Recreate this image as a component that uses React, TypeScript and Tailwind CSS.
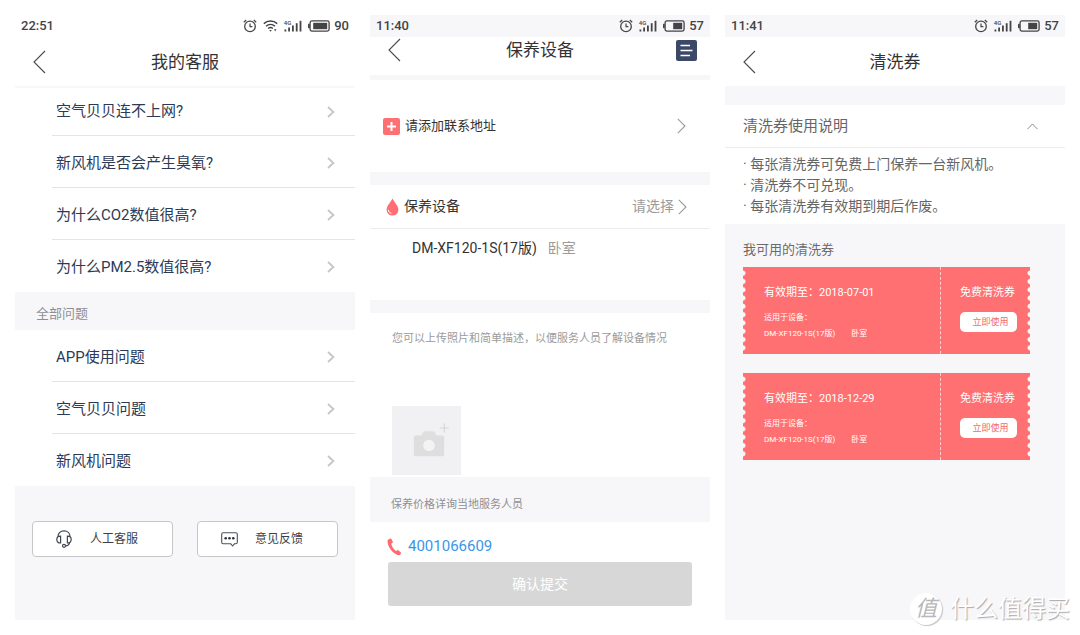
import type { ReactNode } from "react";

function AlarmIcon() {
  return (
    <svg width="14" height="14" viewBox="0 0 14 14" fill="none" stroke="currentColor" aria-hidden="true">
      <circle cx="7" cy="7.4" r="5.3" strokeWidth="1.3" />
      <path d="M7 4.4V7.6H9.4" strokeWidth="1.2" />
      <path d="M0.8 3.2 3.2 1M13.2 3.2 10.8 1" strokeWidth="1.2" />
    </svg>
  );
}

function WifiIcon() {
  return (
    <svg width="15" height="14" viewBox="0 0 15 14" fill="none" stroke="currentColor" aria-hidden="true">
      <path d="M0.8 4.6C4.6 1.2 10.4 1.2 14.2 4.6" strokeWidth="1.5" />
      <path d="M3 7.2C5.6 4.9 9.4 4.9 12 7.2" strokeWidth="1.4" />
      <path d="M5.1 9.5C6.5 8.3 8.5 8.3 9.9 9.5" strokeWidth="1.3" />
      <path d="M6.2 11.1H8.8L7.5 12.8Z" fill="currentColor" stroke="none" />
      <path d="M11 10.2H13.4L12.2 12.4Z" fill="currentColor" stroke="none" />
    </svg>
  );
}

function SignalIcon() {
  return (
    <span className="flex items-end">
      <span className="-mr-[7px] self-start text-[6px] leading-[6px] font-medium">4G</span>
      <svg width="18" height="12" viewBox="0 0 18 12" fill="currentColor" aria-hidden="true">
        <rect x="0.5" y="9.5" width="1.8" height="2" />
        <rect x="4.2" y="7.5" width="1.8" height="4" />
        <rect x="8" y="5.5" width="1.8" height="6" />
        <rect x="11.8" y="3.2" width="1.8" height="8.3" />
        <rect x="15.6" y="0.8" width="1.8" height="10.7" />
      </svg>
    </span>
  );
}

function BatteryIcon({ level }: { level: number }) {
  const width = Math.round((15 * level) / 100);
  return (
    <svg width="22" height="12" viewBox="0 0 22 12" aria-hidden="true">
      <rect x="2.1" y="0.9" width="19" height="10.2" rx="1.8" fill="none" stroke="currentColor" strokeWidth="1.3" />
      <rect x="0" y="3.8" width="1.8" height="4.4" rx="0.6" fill="currentColor" />
      <rect x={19.2 - width} y="2.8" width={width} height="6.4" fill="currentColor" />
    </svg>
  );
}

function StatusBar({ time, level, wifi = false }: { time: string; level: number; wifi?: boolean }) {
  return (
    <div
      className={`flex h-[22px] items-center justify-between px-[6px] text-[13px] leading-[22px] font-medium text-[#444446] ${
        wifi ? "bg-white" : "bg-[#f7f7fa]"
      }`}
    >
      <span>{time}</span>
      <span className="flex items-center">
        <AlarmIcon />
        {wifi && (
          <span className="ml-[6px]">
            <WifiIcon />
          </span>
        )}
        <span className="ml-[6px]">
          <SignalIcon />
        </span>
        <span className="mr-[4px] ml-[6px]">
          <BatteryIcon level={level} />
        </span>
        <span>{level}</span>
      </span>
    </div>
  );
}

function BackButton() {
  return (
    <button type="button" aria-label="返回" className="ml-[5px] w-[13px]">
      <svg width="13" height="24" viewBox="0 0 13 24" fill="none" stroke="#4a4a4a" strokeWidth="1.1" aria-hidden="true">
        <path d="M12 1 1 12 12 23" />
      </svg>
    </button>
  );
}

function TitleBar({ title, className, action }: { title: string; className: string; action?: ReactNode }) {
  return (
    <header className={`grid grid-cols-[1fr_auto_1fr] px-[13px] ${className}`}>
      <BackButton />
      <h1 className="text-[17px] leading-6 text-[#333]">{title}</h1>
      <span className="flex h-6 items-center justify-end">{action}</span>
    </header>
  );
}

function ThinChevron() {
  return (
    <svg width="9" height="16" viewBox="0 0 9 16" fill="none" stroke="#9a9a9a" strokeWidth="1.1" aria-hidden="true">
      <path d="M0.8 0.8 8 8 0.8 15.2" />
    </svg>
  );
}

function QuestionList({ items, first = "h-[51px] pt-[3px]" }: { items: string[]; first?: string }) {
  return (
    <ul className="pb-px pl-[37px]">
      {items.map((item, i) => (
        <li key={item} className={i < items.length - 1 ? "border-b border-[#e4e4e6]" : ""}>
          <a
            href="#"
            className={`flex items-center justify-between pr-5 pl-1 text-[15px] text-[#2c3a56] ${
              i === 0 ? first : "h-[51px] pt-[3px]"
            }`}
          >
            {item}
            <svg width="8" height="12" viewBox="0 0 8 12" fill="none" stroke="#c3c6cb" strokeWidth="1.8" aria-hidden="true">
              <path d="M1 1 6.4 6 1 11" />
            </svg>
          </a>
        </li>
      ))}
    </ul>
  );
}

function HeadsetIcon() {
  return (
    <svg width="16" height="18" viewBox="0 0 16 18" fill="none" stroke="#3f4450" strokeWidth="1.2" aria-hidden="true">
      <path d="M2 6.6C2 3 4.6 0.9 8 0.9S14 3 14 6.6" />
      <path d="M4.6 6.2C2.4 6 0.8 7 0.8 9.5S2.4 13.2 4.6 13Z" />
      <path d="M11.4 6.2C13.6 6 15.2 7 15.2 9.5S13.6 13.2 11.4 13Z" />
      <path d="M13.6 12.8C13 15 11.6 15.8 9.6 15.9" />
      <circle cx="8" cy="15.8" r="1.5" />
    </svg>
  );
}

function MessageIcon() {
  return (
    <svg width="17" height="15" viewBox="0 0 17 15" fill="none" aria-hidden="true">
      <path
        d="M2.2 0.7H14.8Q16.3 0.7 16.3 2.2V10.3Q16.3 11.8 14.8 11.8H13.4L11.6 14L9.8 11.8H2.2Q0.7 11.8 0.7 10.3V2.2Q0.7 0.7 2.2 0.7Z"
        stroke="#4b505c"
        strokeWidth="1.1"
      />
      <g fill="#2c313c">
        <circle cx="4.7" cy="6.3" r="1.3" />
        <circle cx="8.5" cy="6.3" r="1.3" />
        <circle cx="12.3" cy="6.3" r="1.3" />
      </g>
    </svg>
  );
}

function ServiceButton({ icon, label }: { icon: ReactNode; label: string }) {
  return (
    <button
      type="button"
      className="flex h-9 flex-1 items-center rounded-[4px] border border-[#c6c6c8] bg-white pl-[23px] text-[12px] text-[#3c3f48]"
    >
      <span className="flex w-[34px]">{icon}</span>
      {label}
    </button>
  );
}

function SupportScreen() {
  return (
    <section className="flex flex-col bg-white">
      <StatusBar time="22:51" level={90} wifi />
      <TitleBar title="我的客服" className="h-[51px] items-center border-b-2 border-[#f8f8f9]" />
      <QuestionList
        first="h-[47px]"
        items={["空气贝贝连不上网?", "新风机是否会产生臭氧?", "为什么CO2数值很高?", "为什么PM2.5数值很高?"]}
      />
      <h2 className="flex h-[38px] items-center bg-[#f7f7fa] px-[21px] pt-[5px] text-[13px] text-[#8e8f96]">全部问题</h2>
      <QuestionList items={["APP使用问题", "空气贝贝问题", "新风机问题"]} />
      <div className="flex flex-1 items-start gap-6 bg-[#f7f7fa] px-[17px] pt-[35px]">
        <ServiceButton icon={<HeadsetIcon />} label="人工客服" />
        <ServiceButton icon={<MessageIcon />} label="意见反馈" />
      </div>
    </section>
  );
}

function RecordButton() {
  return (
    <button type="button" aria-label="保养记录">
      <svg width="21" height="21" viewBox="0 0 21 21" aria-hidden="true">
        <rect width="21" height="21" rx="2" fill="#3c4867" />
        <path d="M4.5 5.5H14M4.5 10.5H16.5M4.5 15.5H14" stroke="#fff" strokeWidth="1.7" />
      </svg>
    </button>
  );
}

function MaintenanceScreen() {
  return (
    <section className="flex flex-col bg-white">
      <StatusBar time="11:40" level={57} />
      <TitleBar title="保养设备" className="h-[38px] items-start pt-px" action={<RecordButton />} />
      <div className="border-t-[5px] border-[#f7f7fa]">
        <a href="#" className="flex h-[92px] items-center pr-6 pl-[13px] text-[13px] text-[#333]">
          <svg width="17" height="17" viewBox="0 0 17 17" className="mr-[5px]" aria-hidden="true">
            <rect width="17" height="17" rx="2" fill="#ff7073" />
            <path d="M8.5 4V13M4 8.5H13" stroke="#fff" strokeWidth="2" />
          </svg>
          <span className="flex-1">请添加联系地址</span>
          <ThinChevron />
        </a>
      </div>
      <div className="border-y-[13px] border-[#f7f7fa]">
        <div className="flex h-[44px] items-center border-b border-[#ececee] pr-[23px] pl-[16px]">
          <svg width="13" height="18" viewBox="0 0 13 18" className="mr-[5px]" aria-hidden="true">
            <path d="M6.5 0.5C8 3.6 12.4 8 12.4 11.8A5.9 5.8 0 0 1 0.6 11.8C0.6 8 5 3.6 6.5 0.5Z" fill="#ff6e72" />
            <path d="M2.4 12.2C2.7 13.9 3.6 14.8 5 15.2" fill="none" stroke="#fff" strokeWidth="1" strokeLinecap="round" />
          </svg>
          <h2 className="flex-1 text-[14px] text-[#333]">保养设备</h2>
          <button type="button" className="flex items-center gap-1 text-[14px] text-[#9b9b9b]">
            请选择
            <ThinChevron />
          </button>
        </div>
        <p className="h-[71px] pt-[9px] pl-[42px] text-[14px] leading-5 text-[#333]">
          DM-XF120-1S(17版)<span className="ml-[11px] text-[#9b9b9b]">卧室</span>
        </p>
      </div>
      <div className="px-[22px] pt-[17px] pb-[2px]">
        <textarea
          aria-label="设备情况描述"
          placeholder="您可以上传照片和简单描述，以便服务人员了解设备情况"
          className="block h-[76px] w-full resize-none bg-transparent text-[11px] leading-[18px] text-[#333] placeholder:text-[#9b9b9b]"
        />
        <button type="button" aria-label="上传照片" className="block bg-[#f1f1f3]">
          <svg width="69" height="69" viewBox="0 0 69 69" aria-hidden="true">
            <path
              d="M23.5 29.5H29.5L31.5 26Q32 25.2 33 25.2H41Q42 25.2 42.5 26L44.5 29.5H50.5Q52.2 29.5 52.2 31.2V48.5Q52.2 50.2 50.5 50.2H23.5Q21.8 50.2 21.8 48.5V31.2Q21.8 29.5 23.5 29.5Z"
              fill="#dededf"
            />
            <circle cx="37" cy="39.5" r="5.8" fill="#f3f3f5" />
            <path d="M52.3 17.5V26.5M47.8 22H56.8" stroke="#d6d6d8" strokeWidth="1.2" />
          </svg>
        </button>
      </div>
      <p className="h-[45px] bg-[#f7f7fa] pt-[19px] pl-[21px] text-[11px] leading-[18px] text-[#8f8f92]">
        保养价格详询当地服务人员
      </p>
      <a href="tel:4001066609" className="flex h-10 items-center gap-[6px] pt-[9px] pl-[17px] text-[15px] text-[#3a96e8]">
        <svg width="15" height="18" viewBox="0 0 15 18" aria-hidden="true">
          <path
            d="M1 1.8 3.2 0.5Q4 0.2 4.4 0.9L5.8 3.7Q6 4.4 5.4 4.9L4.2 5.8C4.8 8.6 6.6 11.4 9 13L10.4 12.2Q11.1 11.9 11.6 12.4L13.9 14.5Q14.4 15.1 13.9 15.7L12.4 17.2C8.6 17.6 0.6 10.4 0.5 3.2Q0.5 2.2 1 1.8Z"
            fill="#ff6a6e"
          />
        </svg>
        4001066609
      </a>
      <button type="button" className="mx-[18px] h-11 rounded-[3px] bg-[#d7d7d7] text-[14px] text-white">
        确认提交
      </button>
    </section>
  );
}

function Perforation({ side }: { side: "left" | "right" }) {
  return (
    <span
      aria-hidden="true"
      className={`my-[2px] w-[3px] bg-[length:3px_8px] bg-repeat-round ${
        side === "left"
          ? "bg-[radial-gradient(circle_at_0_50%,#f7f7fa_2px,#ff7073_3px)]"
          : "bg-[radial-gradient(circle_at_100%_50%,#f7f7fa_2px,#ff7073_3px)]"
      }`}
    />
  );
}

function Coupon({ date }: { date: string }) {
  return (
    <li className="flex h-[87px] bg-[#ff7073] text-white">
      <Perforation side="left" />
      <div className="flex-1 pt-[18px] pl-[18px]">
        <p className="text-[11px] leading-4">有效期至：{date}</p>
        <p className="mt-[9px] text-[8px] leading-4">适用于设备：</p>
        <p className="text-[8px] leading-4">
          DM-XF120-1S(17版)<span className="ml-4">卧室</span>
        </p>
      </div>
      <div className="w-[87px] border-l border-dashed border-[#ffd0d1] pt-[18px] pl-[19px]">
        <p className="text-[11px] leading-4">免费清洗券</p>
        <button
          type="button"
          className="mt-[11px] block h-5 w-[57px] rounded-[5px] bg-white pl-1 text-[9px] leading-5 text-[#f2696c]"
        >
          立即使用
        </button>
      </div>
      <Perforation side="right" />
    </li>
  );
}

function CouponScreen() {
  return (
    <section className="flex flex-col bg-white">
      <StatusBar time="11:41" level={57} />
      <TitleBar title="清洗券" className="h-[49px] items-center" />
      <button
        type="button"
        aria-expanded="true"
        className="flex h-[62px] items-center justify-between border-t-[19px] border-b border-t-[#f7f7fa] border-b-[#ececee] pr-[27px] pl-[18px] text-[15px] text-[#666]"
      >
        清洗券使用说明
        <svg width="11" height="7" viewBox="0 0 11 7" fill="none" stroke="#8a8a8a" strokeWidth="1" aria-hidden="true">
          <path d="M0.5 6.2 5.5 1 10.5 6.2" />
        </svg>
      </button>
      <ul className="pt-[6px] pb-[7px] pl-[18px] text-[14px] leading-[21px] text-[#666]">
        <li>· 每张清洗券可免费上门保养一台新风机。</li>
        <li>· 清洗券不可兑现。</li>
        <li>· 每张清洗券有效期到期后作废。</li>
      </ul>
      <div className="flex-1 bg-[#f7f7fa] pt-[17px] pr-[35px] pl-[18px]">
        <h2 className="text-[13px] leading-[18px] text-[#6b6b6b]">我可用的清洗券</h2>
        <ul className="mt-2 flex flex-col gap-[19px]">
          <Coupon date="2018-07-01" />
          <Coupon date="2018-12-29" />
        </ul>
      </div>
    </section>
  );
}

function Watermark() {
  return (
    <div className="pointer-events-none absolute right-[10px] bottom-[10px] flex items-center gap-2">
      <span className="flex size-8 items-center justify-center rounded-full bg-white text-[22px] leading-none text-[#b8b8ba] italic shadow-[1px_1px_1px_#c4c4c6]">
        值
      </span>
      <span className="text-[24px] leading-8 text-white [text-shadow:1px_1px_1px_#a8a8aa]">什么值得买</span>
    </div>
  );
}

export default function App() {
  return (
    <main className="relative grid min-h-screen grid-cols-3 gap-[15px] bg-white p-[15px] font-[Roboto,'Noto_Sans_CJK_SC',sans-serif]">
      <SupportScreen />
      <MaintenanceScreen />
      <CouponScreen />
      <Watermark />
    </main>
  );
}
